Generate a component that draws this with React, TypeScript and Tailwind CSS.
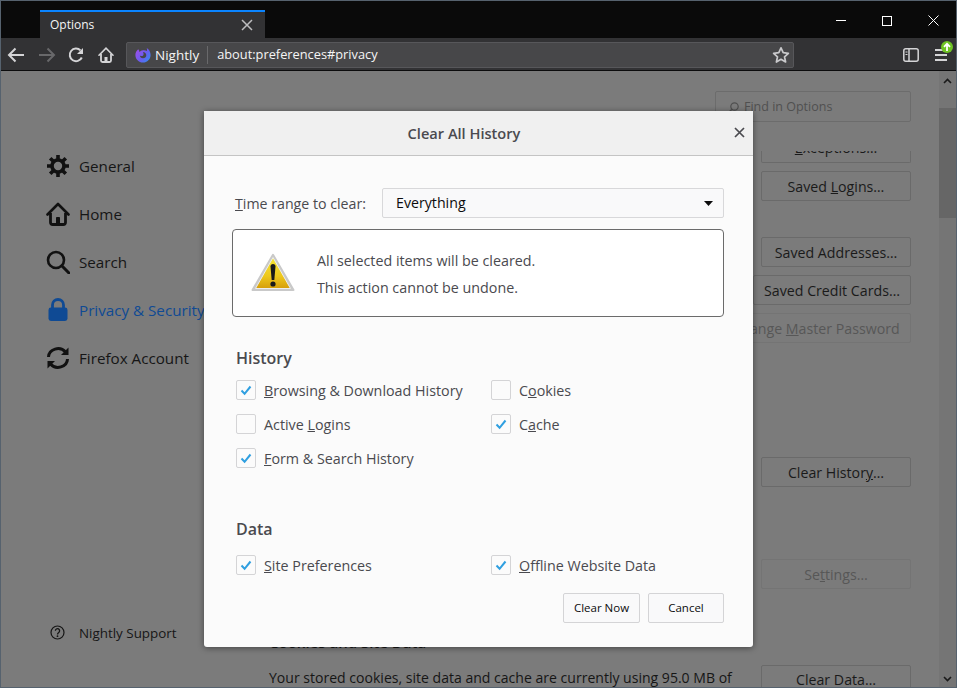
import React from "react";

const font = { fontFamily: '"Open Sans", sans-serif' };

function Check({ on }: { on?: boolean }) {
  return (
    <span className="w-[20px] h-[20px] shrink-0 rounded-[2px] border border-[#d4d4d6] bg-[#fbfbfb] flex items-center justify-center">
      {on && (
        <svg width="12" height="11" viewBox="0 0 12 11">
          <path d="M1.5 5.5 L4.6 8.8 L10.5 1.5" fill="none" stroke="#2f9fe0" strokeWidth="2" />
        </svg>
      )}
    </span>
  );
}

function Opt({ on, children }: { on?: boolean; children: React.ReactNode }) {
  return (
    <div className="h-[20px] flex items-center gap-[8px] text-[14.3px] text-[#4a4a4f] whitespace-nowrap">
      <Check on={on} />
      <span className="pt-px">{children}</span>
    </div>
  );
}

function BgBtn({ children, disabled, w = "w-[150px]", mt }: { children: React.ReactNode; disabled?: boolean; w?: string; mt: string }) {
  return (
    <div className={`${w} ${mt} h-[30px] shrink-0 rounded-[2px] border flex items-center justify-center pt-px text-[14.2px] whitespace-nowrap ${disabled ? "border-[#747474] text-[#575757]" : "border-[#6a6a6a] text-[#1a1a1a]"}`}>
      <span>{children}</span>
    </div>
  );
}

function NavRow({ icon, children, active }: { icon: React.ReactNode; children: React.ReactNode; active?: boolean }) {
  return (
    <div className={`h-[48px] flex items-center text-[15.2px] whitespace-nowrap ${active ? "text-[#0f4a94]" : "text-[#161616]"}`}>
      <span className="w-[24px] h-[24px] flex items-center justify-center mr-[9px]">{icon}</span>
      <span>{children}</span>
    </div>
  );
}

const GearIcon = () => (
  <svg width="24" height="24" viewBox="0 0 24 24">
    <circle cx="12" cy="12" r="6" fill="none" stroke="#111" strokeWidth="3.6" />
    <g stroke="#111" strokeWidth="3.6" strokeLinecap="butt">
      <path d="M12 1v4M12 19v4M1 12h4M19 12h4M4.2 4.2l2.9 2.9M16.9 16.9l2.9 2.9M4.2 19.8l2.9-2.9M16.9 7.1l2.9-2.9" />
    </g>
  </svg>
);
const HomeIcon = () => (
  <svg width="24" height="24" viewBox="0 0 24 24">
    <path d="M1.5 12.5 12 2l10.5 10.5" fill="none" stroke="#111" strokeWidth="2.6" strokeLinecap="round" strokeLinejoin="round" />
    <path d="M4.5 11v9.2A2.3 2.3 0 0 0 6.8 22.5h10.4a2.3 2.3 0 0 0 2.3-2.3V11" fill="none" stroke="#111" strokeWidth="2.8" />
    <rect x="10" y="15" width="4" height="7" rx="0.8" fill="#111" />
  </svg>
);
const SearchIcon = () => (
  <svg width="24" height="24" viewBox="0 0 24 24">
    <circle cx="10" cy="10" r="8" fill="none" stroke="#111" strokeWidth="2.6" />
    <path d="M15.8 15.8 L23 23" stroke="#111" strokeWidth="3" strokeLinecap="round" />
  </svg>
);
const LockIcon = () => (
  <svg width="24" height="24" viewBox="0 0 24 24">
    <path d="M6.5 11V7a5.5 5.5 0 0 1 11 0v4" fill="none" stroke="#0f4a94" strokeWidth="2.8" />
    <rect x="2.5" y="9.5" width="19" height="13.5" rx="2.4" fill="#0f4a94" />
  </svg>
);
const SyncIcon = () => (
  <svg width="24" height="24" viewBox="0 0 24 24" fill="none" stroke="#111" strokeWidth="3">
    <path d="M2.5 11A9.5 8.6 0 0 1 19.5 6" />
    <path d="M21.5 13A9.5 8.6 0 0 1 4.5 18" />
    <path d="M22.5 1.5V9h-7.5z" fill="#111" stroke="none" />
    <path d="M1.5 22.5V15H9z" fill="#111" stroke="none" />
  </svg>
);

export default function App() {
  return (
    <div style={font} className="relative w-[957px] h-[688px] overflow-hidden border border-[#56626e] flex flex-col bg-[#7b7b7b]">
      {/* title bar */}
      <div className="h-[37px] shrink-0 bg-[#0a0a0a] flex items-end relative">
        <div className="ml-[39px] w-[225px] h-[28px] bg-[#323234] border-t-2 border-[#0a84ff] flex items-center justify-between pl-[10px] pr-[12px] text-[12px] text-[#f5f5f5]">
          <span>Options</span>
          <svg width="12" height="12" viewBox="0 0 12 12"><path d="M1 1l10 10M11 1 1 11" stroke="#bdbdbf" strokeWidth="1.5" /></svg>
        </div>
        <div className="ml-auto h-full flex items-center">
          <div className="w-[46px] h-full flex items-center justify-center pt-[1px]">
            <svg width="10" height="10" viewBox="0 0 10 10"><path d="M0 5.5h10" stroke="#fff" strokeWidth="1" /></svg>
          </div>
          <div className="w-[46px] h-full flex items-center justify-center pt-[2px]">
            <svg width="10" height="10" viewBox="0 0 10 10"><rect x="0.5" y="0.5" width="9" height="9" fill="none" stroke="#fff" /></svg>
          </div>
          <div className="w-[46px] h-full flex items-center justify-center pt-[2px]">
            <svg width="11" height="11" viewBox="0 0 11 11"><path d="M.5.5l10 10M10.5.5l-10 10" stroke="#fff" strokeWidth="1" /></svg>
          </div>
        </div>
      </div>
      {/* toolbar */}
      <div className="h-[33px] shrink-0 bg-[#323234] border-b border-[#0c0c0d] flex items-center pl-[6px] pt-[1px]">
        <svg className="mr-[13px]" width="18" height="16" viewBox="0 0 18 16"><path d="M17 8H2M8.5 1.5 2 8l6.5 6.5" fill="none" stroke="#d4d4d6" strokeWidth="2" /></svg>
        <svg className="mr-[12px]" width="18" height="16" viewBox="0 0 18 16"><path d="M1 8h15M9.5 1.5 16 8l-6.5 6.5" fill="none" stroke="#68686a" strokeWidth="2" /></svg>
        <svg className="mr-[14px]" width="16" height="16" viewBox="0 0 16 16"><path d="M13.8 10.5A6.3 6.3 0 1 1 12.5 3.4" fill="none" stroke="#d4d4d6" strokeWidth="2" /><path d="M15 1v6H9z" fill="#d4d4d6" /></svg>
        <svg className="mr-[12px]" width="16" height="16" viewBox="0 0 16 16"><path d="M1 8.2 8 1.2l7 7" fill="none" stroke="#d4d4d6" strokeWidth="1.6" strokeLinecap="round" /><path d="M3 7v6.5A1.5 1.5 0 0 0 4.5 15h7a1.5 1.5 0 0 0 1.5-1.5V7" fill="none" stroke="#d4d4d6" strokeWidth="1.8" /><rect x="6.5" y="10" width="3" height="5" fill="#d4d4d6" /></svg>
        <div className="w-[668px] h-[26px] rounded-[2px] bg-[#474749] border border-[#57575a] flex items-center text-[#f5f5f5]">
          <svg className="ml-[8px] mr-[4px]" width="16" height="16" viewBox="0 0 16 16">
            <defs>
              <linearGradient id="nl" x1="0" y1="0.1" x2="1" y2="0.9"><stop offset="0" stopColor="#a24de6" /><stop offset="0.55" stopColor="#6a5cf0" /><stop offset="1" stopColor="#2f8ff0" /></linearGradient>
            </defs>
            <path d="M3.200 2.200C1.500 3.600.4 5.700.4 8c0 4.200 3.400 7.600 7.600 7.600s7.600-3.400 7.600-7.600c0-2.800-1.400-5.400-3.900-7 .5 1.300.5 2.300.1 3.100C10.800 3.200 9.400 3 8 3.200 6.600 3.400 5.300 4 4.400 5.100c0-1.100-.4-2-1.200-2.900z" fill="url(#nl)" />
            <path d="M8 5.100c1.800 0 3.300 1.400 3.300 3.100S9.800 11.300 8 11.300 4.900 10 4.900 8.500c1 .7 2.200.7 3 .2.800-.5 1-1.600.1-3.600z" fill="#474749" />
          </svg>
          <span className="pt-px text-[13.5px]">Nightly</span>
          <span className="w-px h-[18px] bg-[#69696b] ml-[8px] mr-[9px]" />
          <span className="pt-px text-[12.8px]">about:preferences#privacy</span>
          <svg className="ml-auto mr-[3px]" width="18" height="18" viewBox="0 0 18 18"><path d="M9 1.800l2.200 4.900 5.200.6-3.900 3.500 1.100 5.200L9 13.300 4.400 16l1.100-5.200L1.600 7.300l5.200-.6z" fill="none" stroke="#c9c9cb" strokeWidth="1.700" strokeLinejoin="round" /></svg>
        </div>
        <svg className="ml-[109px]" width="16" height="14" viewBox="0 0 16 14"><rect x="0.800" y="0.800" width="14.400" height="12.400" rx="2" fill="none" stroke="#d4d4d6" strokeWidth="1.500" /><path d="M6 1v12" stroke="#d4d4d6" strokeWidth="1.500" /><path d="M2.500 4h2M2.500 6.500h2" stroke="#d4d4d6" /></svg>
        <div className="relative ml-[16px] w-[12px] h-[12px] flex flex-col justify-between">
          <span className="h-[2px] bg-[#d4d4d6]" />
          <span className="h-[2px] bg-[#d4d4d6]" />
          <span className="h-[2px] bg-[#d4d4d6]" />
          <svg className="absolute -top-[8px] left-[6px]" width="12" height="12" viewBox="0 0 12 12"><circle cx="6" cy="6" r="6" fill="#6fc424" /><path d="M6 10V3M3 5.800 6 2.800l3 3" fill="none" stroke="#fff" strokeWidth="1.800" /></svg>
        </div>
      </div>
      {/* page behind the dialog */}
      <div className="flex-1 min-h-0 flex overflow-hidden">
        <div className="w-[268px] shrink-0 pl-[45px] pt-[71px] pb-[44px] flex flex-col">
          <NavRow icon={<GearIcon />}>General</NavRow>
          <NavRow icon={<HomeIcon />}>Home</NavRow>
          <NavRow icon={<SearchIcon />}>Search</NavRow>
          <NavRow icon={<LockIcon />} active>Privacy &amp; Security</NavRow>
          <NavRow icon={<SyncIcon />}>Firefox Account</NavRow>
          <div className="mt-auto flex items-center text-[13.4px] text-[#161616]">
            <svg className="ml-[4px] mr-[14px]" width="15" height="15" viewBox="0 0 15 15"><circle cx="7.500" cy="7.500" r="6.500" fill="none" stroke="#161616" strokeWidth="1.200" /><path d="M5.400 5.800a2.100 2.100 0 1 1 3.300 1.700c-.8.600-1.200 1-1.200 1.900" fill="none" stroke="#161616" strokeWidth="1.300" /><circle cx="7.500" cy="11.200" r=".9" fill="#161616" /></svg>
            <span>Nightly Support</span>
          </div>
        </div>
        <div className="flex-1 min-w-0 flex flex-col pr-[28px]">
          <div className="self-end mt-[20px] w-[196px] h-[31px] shrink-0 rounded-[2px] border border-[#6c6c6c] flex items-center pl-[11px] pt-[2px] text-[12.5px] text-[#505050]">
            <svg className="mr-[5px]" width="12" height="12" viewBox="0 0 12 12"><circle cx="7.500" cy="4.500" r="3.700" fill="none" stroke="#505050" strokeWidth="1.200" /><path d="M5 7.200 1 11" stroke="#505050" strokeWidth="1.400" /></svg>
            <span>Find in Options</span>
          </div>
          <div className="self-end mt-[29px] h-[12px] w-[150px] shrink-0 overflow-hidden rounded-b-[2px] border border-t-0 border-[#6a6a6a] flex items-end justify-center text-[14.2px] text-[#1a1a1a]">
            <span className="relative -top-[4px]"><u>E</u>xceptions…</span>
          </div>
          <div className="self-end flex flex-col items-end">
            <BgBtn mt="mt-[8px]">Saved <u>L</u>ogins…</BgBtn>
            <BgBtn mt="mt-[36px]">Saved Addresses…</BgBtn>
            <BgBtn mt="mt-[8px]" w="w-[158px]">Saved Credit Cards…</BgBtn>
            <BgBtn mt="mt-[8px]" w="w-[190px]" disabled>Change <u>M</u>aster Password</BgBtn>
            <BgBtn mt="mt-[114px]">Clear Histor<u>y</u>…</BgBtn>
            <BgBtn mt="mt-[72px]" disabled>Se<u>t</u>tings…</BgBtn>
          </div>
          <div className="mt-[42px] font-semibold text-[15px] text-[#161616] whitespace-nowrap">Cookies and Site Data</div>
          <div className="mt-[11px] flex justify-between">
            <span className="mt-[2px] text-[14.05px] text-[#161616] whitespace-nowrap">Your stored cookies, site data and cache are currently using 95.0 MB of</span>
            <BgBtn mt="mt-0">Clear Data…</BgBtn>
          </div>
        </div>
        <div className="w-[17px] shrink-0 bg-[#757575] flex flex-col items-center justify-between relative pt-[7px] pb-[5px]">
          <svg width="9" height="6" viewBox="0 0 9 6"><path d="M1 5l3.500-3.500L8 5" fill="none" stroke="#1a1a1a" strokeWidth="1.600" /></svg>
          <div className="absolute top-[37px] left-0 w-full h-[110px] bg-[#666666]" />
          <svg width="9" height="6" viewBox="0 0 9 6"><path d="M1 1l3.500 3.500L8 1" fill="none" stroke="#1a1a1a" strokeWidth="1.600" /></svg>
        </div>
      </div>

      {/* dialog */}
      <div className="absolute left-[203px] top-[110px] w-[549px] h-[536px] bg-[#fbfbfb] rounded-b-[3px] shadow-[0_1px_6px_rgba(0,0,0,0.45)] flex flex-col">
        <div className="h-[45px] shrink-0 bg-[#f0f0f0] border-b border-[#c4c4c4] flex items-center relative pr-[29px] pt-px">
          <span className="w-full text-center text-[14.6px] font-semibold text-[#4a4a4f]">Clear All History</span>
          <svg className="absolute right-[8px] top-[16px]" width="11" height="11" viewBox="0 0 11 11"><path d="M1 1l9 9M10 1l-9 9" stroke="#4a4a4f" strokeWidth="1.700" /></svg>
        </div>
        <div className="flex-1 pl-[28px] pr-[29px] pt-[32px] flex flex-col">
          <div className="flex items-center h-[30px] text-[14.2px] text-[#4a4a4f]">
            <span className="ml-[3px] w-[147px] pt-px whitespace-nowrap"><u>T</u>ime range to clear:</span>
            <div className="flex-1 h-[30px] rounded-[2px] border border-[#d8d8da] bg-[#f9f9fa] flex items-center justify-between pl-[13px] pr-[10px] text-[14.2px] text-[#0c0c0d]">
              <span>Everything</span>
              <svg width="9" height="5" viewBox="0 0 9 5"><path d="M0 0h9L4.500 5z" fill="#0c0c0d" /></svg>
            </div>
          </div>
          <div className="mt-[11px] h-[88px] rounded-[4px] border border-[#6b6b6b] bg-white flex items-center text-[14.3px] text-[#4a4a4f]">
            <svg className="ml-[18px] mr-[22px]" width="44" height="40" viewBox="0 0 44 40">
              <defs>
                <linearGradient id="wy" x1="0" y1="0" x2="0" y2="1"><stop offset="0" stopColor="#f6e637" /><stop offset="0.6" stopColor="#eec81c" /><stop offset="1" stopColor="#d69e0a" /></linearGradient>
              </defs>
              <path d="M22 1.800 42.500 37H1.500z" fill="#c9c9c9" stroke="#c9c9c9" strokeWidth="2" strokeLinejoin="round" />
              <path d="M22 4.500 39.500 35.500H4.500z" fill="url(#wy)" stroke="#eeeeee" strokeWidth="1" strokeLinejoin="round" />
              <path d="M19.500 13.500a2.500 2.500 0 0 1 5 0l-1.200 13.500h-2.600z" fill="#1a1a1a" />
              <circle cx="22" cy="31" r="2.600" fill="#1a1a1a" />
            </svg>
            <div className="flex flex-col gap-[6px] pt-px whitespace-nowrap leading-[21px]">
              <span>All selected items will be cleared.</span>
              <span>This action cannot be undone.</span>
            </div>
          </div>
          <div className="mt-[30px] ml-[4px] text-[16px] leading-[22px] font-semibold text-[#4a4a4f]">History</div>
          <div className="mt-[11px] ml-[4px] grid grid-cols-[255px_1fr] gap-y-[14px]">
            <Opt on><u>B</u>rowsing &amp; Download History</Opt>
            <Opt>C<u>o</u>okies</Opt>
            <Opt>Active <u>L</u>ogins</Opt>
            <Opt on>C<u>a</u>che</Opt>
            <Opt on><u>F</u>orm &amp; Search History</Opt>
          </div>
          <div className="mt-[50px] ml-[4px] text-[16px] leading-[22px] font-semibold text-[#4a4a4f]">Data</div>
          <div className="mt-[15px] ml-[4px] grid grid-cols-[255px_1fr]">
            <Opt on><u>S</u>ite Preferences</Opt>
            <Opt on><u>O</u>ffline Website Data</Opt>
          </div>
          <div className="mt-[18px] flex justify-end gap-[8px]">
            <div className="w-[77px] h-[30px] rounded-[2px] border border-[#d4d4d6] bg-[#f9f9fa] flex items-center justify-center text-[11.5px] text-[#0c0c0d]">Clear Now</div>
            <div className="w-[76px] h-[30px] rounded-[2px] border border-[#d4d4d6] bg-[#f9f9fa] flex items-center justify-center text-[11.5px] text-[#0c0c0d]">Cancel</div>
          </div>
        </div>
      </div>
    </div>
  );
}
